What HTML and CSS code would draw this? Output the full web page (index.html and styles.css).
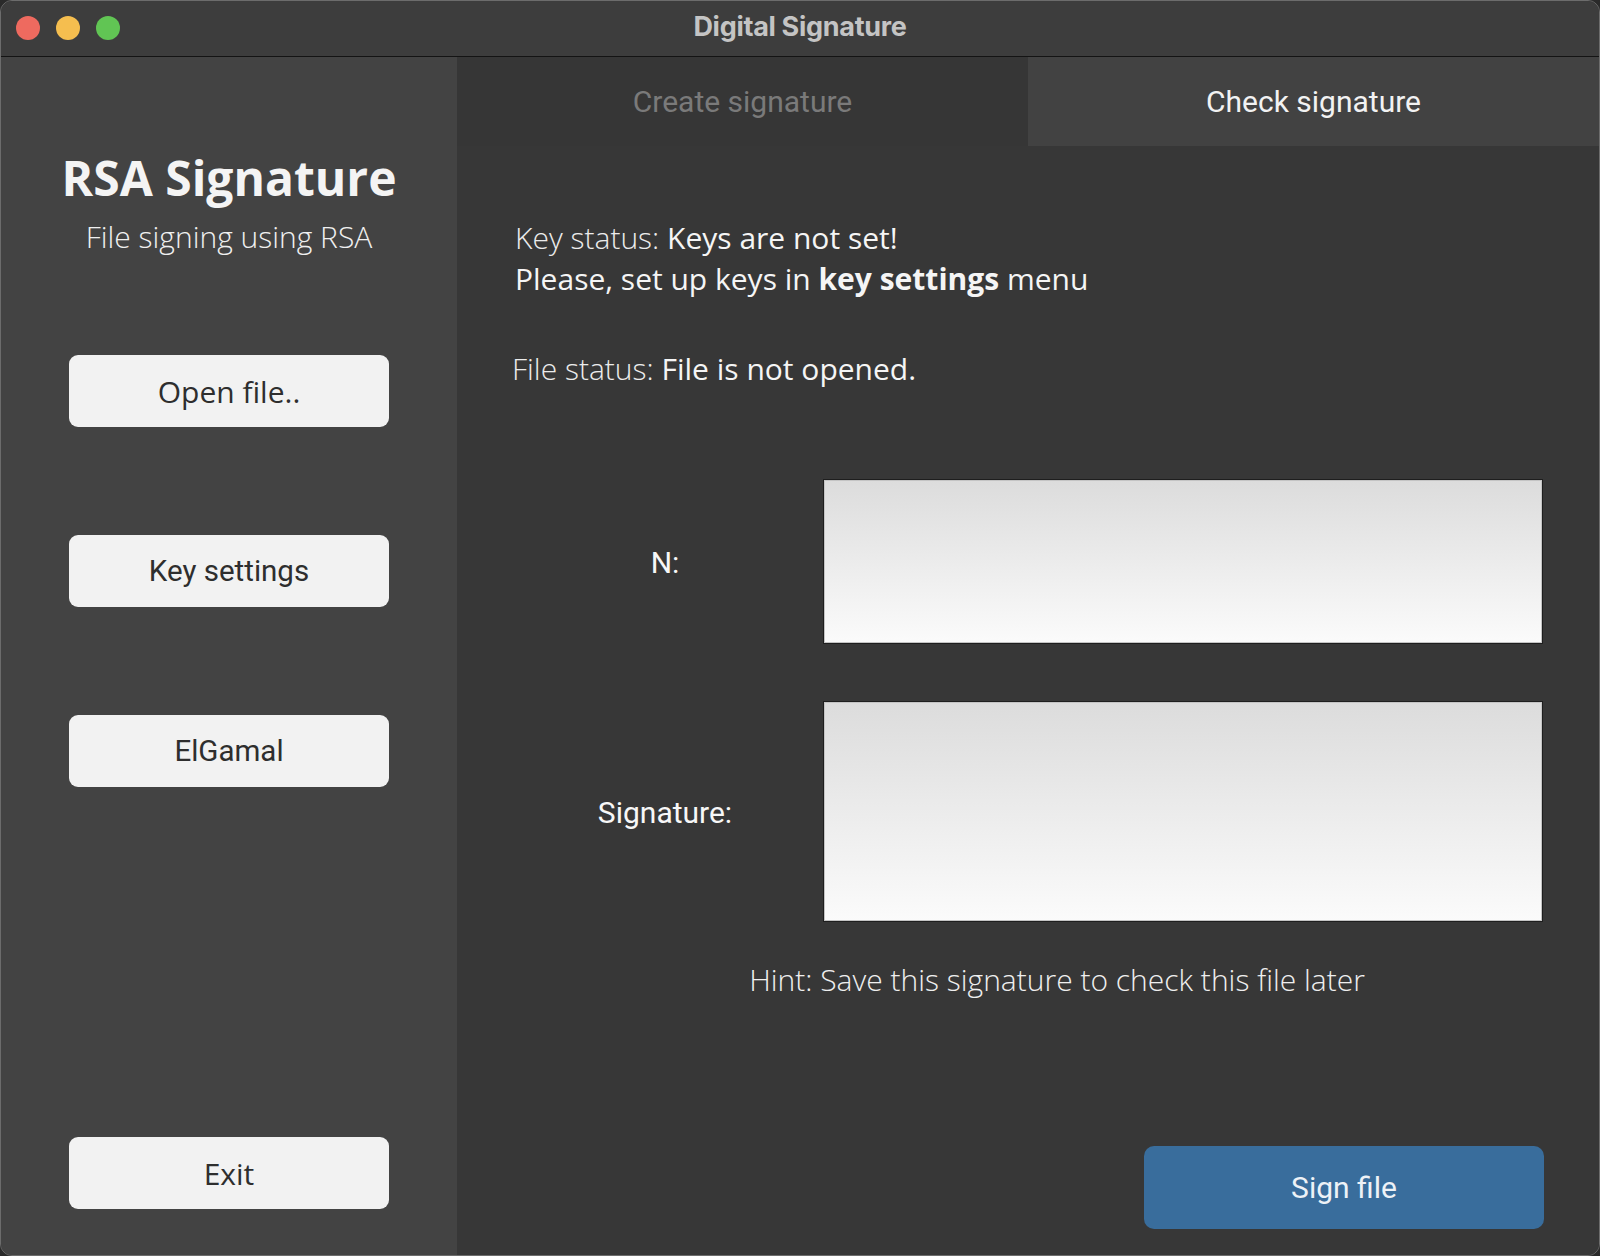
FILE: index.html
```html
<!DOCTYPE html>
<html lang="en">
<head>
<meta charset="utf-8">
<title>Digital Signature</title>
<link rel="stylesheet" href="styles.css">
</head>
<body>
<div class="window">
  <header class="titlebar">
    <div class="lights">
      <span class="light red"></span>
      <span class="light yellow"></span>
      <span class="light green"></span>
    </div>
    <div class="title">Digital Signature</div>
  </header>
  <div class="content">
    <aside class="sidebar">
      <h1 class="app-title">RSA Signature</h1>
      <p class="app-sub">File signing using RSA</p>
      <button class="side-btn open-sans first">Open file..</button>
      <button class="side-btn roboto">Key settings</button>
      <button class="side-btn roboto">ElGamal</button>
      <button class="side-btn open-sans exit">Exit</button>
    </aside>
    <main class="main">
      <nav class="tabs">
        <div class="tab inactive">Create signature</div>
        <div class="tab active">Check signature</div>
      </nav>
      <section class="panel">
        <p class="status">
          <span class="light-w">Key status: </span><span class="val">Keys are not set!</span><br>
          <span class="val">Please, set up keys in <b>key settings</b> menu</span>
        </p>
        <p class="status file-status"><span class="light-w">File status: </span><span class="val">File is not opened.</span></p>
        <div class="field-row row-n">
          <label class="field-label">N:</label>
          <div class="field-box"></div>
        </div>
        <div class="field-row row-sig">
          <label class="field-label">Signature:</label>
          <div class="field-box"></div>
        </div>
        <p class="hint">Hint: Save this signature to check this file later</p>
        <div class="actions">
          <button class="sign-btn">Sign file</button>
        </div>
      </section>
    </main>
  </div>
</div>
</body>
</html>
```

FILE: styles.css
```css
html, body {
  margin: 0;
  padding: 0;
  background: #2a2a2a;
}
body {
  width: 1600px;
  height: 1256px;
  overflow: hidden;
}
.window {
  box-sizing: border-box;
  width: 1600px;
  height: 1256px;
  border: 1px solid #6c6c6c;
  border-radius: 12px;
  overflow: hidden;
  display: flex;
  flex-direction: column;
  background: #373737;
}
.titlebar {
  height: 55px;
  flex: 0 0 55px;
  background: #3d3d3d;
  border-bottom: 1px solid #141414;
  display: flex;
  align-items: center;
  position: relative;
}
.lights {
  display: flex;
  gap: 16px;
  padding-left: 15px;
  margin-top: -1px;
}
.light {
  width: 24px;
  height: 24px;
  border-radius: 50%;
  display: block;
}
.red { background: #ee6a5f; }
.yellow { background: #f5be4f; }
.green { background: #61c554; }
.title {
  position: absolute;
  left: 0;
  right: 0;
  top: 0;
  height: 55px;
  line-height: 52px;
  text-align: center;
  font-family: Inter, "Liberation Sans", sans-serif;
  font-weight: 700;
  font-size: 27px;
  color: #c4c4c4;
  letter-spacing: -0.3px;
}
.content {
  flex: 1;
  display: flex;
  min-height: 0;
}
.sidebar {
  width: 456px;
  flex: 0 0 456px;
  background: #434343;
  display: flex;
  flex-direction: column;
  align-items: center;
}
.app-title {
  margin: 93px 0 0;
  font-family: "Open Sans", sans-serif;
  font-weight: 700;
  font-size: 48px;
  line-height: 56px;
  color: #f4f4f4;
}
.app-sub {
  margin: 11px 0 0;
  font-family: "Open Sans", sans-serif;
  font-weight: 300;
  font-size: 30px;
  line-height: 40px;
  color: #f0f0f0;
}
.side-btn {
  width: 320px;
  height: 72px;
  border: none;
  border-radius: 9px;
  background: #f2f2f2;
  color: #2e2e2e;
  font-size: 30px;
  margin-top: 108px;
  padding: 0;
}
.side-btn.first { margin-top: 98px; }
.side-btn.exit { margin-top: auto; margin-bottom: 46px; }
.open-sans { font-family: "Open Sans", sans-serif; }
.side-btn.roboto { font-family: Roboto, sans-serif; font-size: 29.5px; }
.main {
  flex: 1;
  display: flex;
  flex-direction: column;
  background: #373737;
}
.tabs {
  display: flex;
  height: 89px;
  flex: 0 0 89px;
}
.tab {
  flex: 1;
  display: flex;
  align-items: center;
  justify-content: center;
  font-family: Roboto, sans-serif;
  font-size: 30px;
}
.tab.inactive { background: #363636; color: #7a7a7a; }
.tab.active { background: #424242; color: #f2f2f2; }
.panel {
  flex: 1;
  display: flex;
  flex-direction: column;
  padding-left: 58px;
}
.status {
  margin: 71px 0 0;
  font-family: "Open Sans", sans-serif;
  font-size: 30px;
  line-height: 41px;
  color: #f5f5f5;
}
.status b { font-weight: 700; }
.light-w { font-weight: 300; color: #ececec; }
.val { font-weight: 400; }
.file-status { margin-top: 49px; margin-left: -3px; }
.field-row {
  display: flex;
  align-items: center;
  margin-right: 56px;
}
.row-n { margin-top: 90px; height: 165px; }
.row-sig { margin-top: 57px; height: 221px; }
.field-label {
  width: 300px;
  text-align: center;
  font-family: Roboto, sans-serif;
  font-size: 30px;
  color: #f7f7f7;
  padding-top: 2px;
}
.field-box {
  margin-left: 8px;
  flex: 1;
  height: 100%;
  box-sizing: border-box;
  border: 1px solid #1e1e1e;
  box-shadow: inset 0 0 0 1px #c4c4c4;
  background: linear-gradient(#dcdcdc, #fbfbfb);
}
.hint {
  margin: 37px 0 0;
  text-align: center;
  font-family: "Open Sans", sans-serif;
  font-weight: 300;
  font-size: 30px;
  line-height: 41px;
  color: #efefef;
}
.actions {
  margin-top: auto;
  display: flex;
  justify-content: flex-end;
  padding-right: 55px;
  padding-bottom: 26px;
}
.sign-btn {
  width: 400px;
  height: 83px;
  border: none;
  border-radius: 10px;
  background: #396d9c;
  color: #edf2f7;
  font-family: Roboto, sans-serif;
  font-size: 30px;
  padding: 0;
}
```
